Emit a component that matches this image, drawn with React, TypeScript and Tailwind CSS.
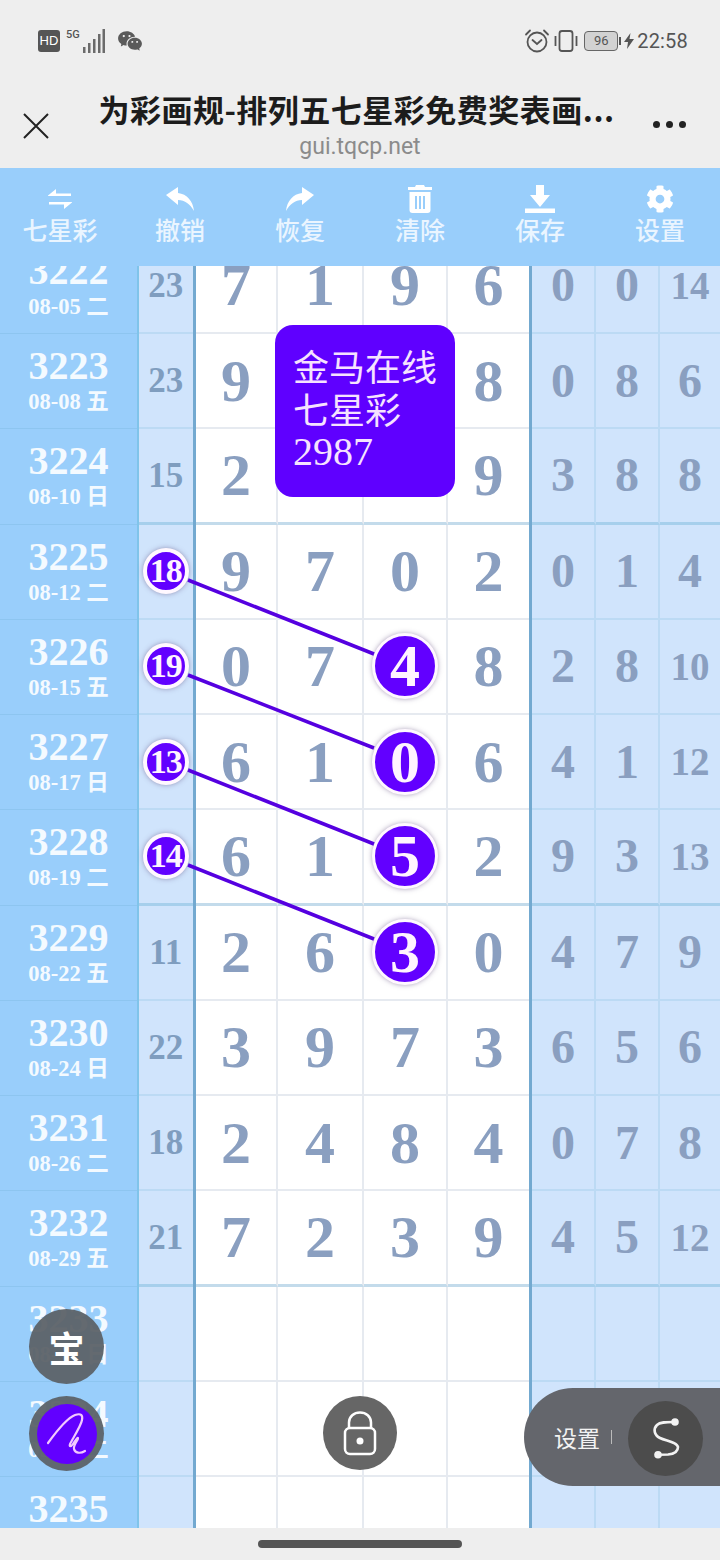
import React from 'react'
import {FaCog} from 'react-icons/fa'
import {RiWechatFill} from 'react-icons/ri'

const SERIF = 'font-["Liberation_Serif","Noto_Sans_CJK_SC",serif]'

type Cell = number | string | null

interface Row {
  no: number;
  date: string;
  sum: number | null;
  ball?: number;
  digits: Cell[];
  hit?: number;
  tail: Cell[];
}

const rows: Row[] = [
  {no: 3222, date: '08-05 二', sum: 23, digits: [7, 1, 9, 6], tail: [0, 0, 14]},
  {no: 3223, date: '08-08 五', sum: 23, digits: [9, null, null, 8], tail: [0, 8, 6]},
  {no: 3224, date: '08-10 日', sum: 15, digits: [2, null, null, 9], tail: [3, 8, 8]},
  {no: 3225, date: '08-12 二', sum: null, ball: 18, digits: [9, 7, 0, 2], tail: [0, 1, 4]},
  {no: 3226, date: '08-15 五', sum: null, ball: 19, digits: [0, 7, 4, 8], hit: 2, tail: [2, 8, 10]},
  {no: 3227, date: '08-17 日', sum: null, ball: 13, digits: [6, 1, 0, 6], hit: 2, tail: [4, 1, 12]},
  {no: 3228, date: '08-19 二', sum: null, ball: 14, digits: [6, 1, 5, 2], hit: 2, tail: [9, 3, 13]},
  {no: 3229, date: '08-22 五', sum: 11, digits: [2, 6, 3, 0], hit: 2, tail: [4, 7, 9]},
  {no: 3230, date: '08-24 日', sum: 22, digits: [3, 9, 7, 3], tail: [6, 5, 6]},
  {no: 3231, date: '08-26 二', sum: 18, digits: [2, 4, 8, 4], tail: [0, 7, 8]},
  {no: 3232, date: '08-29 五', sum: 21, digits: [7, 2, 3, 9], tail: [4, 5, 12]},
  {no: 3233, date: '08-31 日', sum: null, digits: [null, null, null, null], tail: [null, null, null]},
  {no: 3234, date: '09-02 二', sum: null, digits: [null, null, null, null], tail: [null, null, null]},
  {no: 3235, date: '09-05 五', sum: null, digits: [null, null, null, null], tail: [null, null, null]},
]

const links = [
  [188, 580, 374, 654],
  [188, 675, 374, 748],
  [188, 770, 374, 844],
  [188, 865, 374, 939],
]

const digitCols = ['w-[82px]', 'w-[86px]', 'w-[84px]', 'w-[81px]']
const tailCols = ['w-[64px]', 'w-[64px]', 'w-[60px]']

function SwapIcon() {
  return (
    <svg width="28" height="28" viewBox="0 0 28 28" fill="white">
      <path d="M2 10.500 10 4v4.500h15V11H2z" />
      <path d="M26 17.500 18 24v-4.500H3V17h23z" />
    </svg>
  )
}

function ReplyIcon() {
  return (
    <svg width="30" height="28" viewBox="0 0 30 28" fill="white">
      <path d="M1 10 13 2v6c9 1 15 8 16 18-4-7-9-11-16-11v5z" />
    </svg>
  )
}

function ShareIcon() {
  return (
    <svg width="30" height="28" viewBox="0 0 30 28" fill="white">
      <path d="M29 10 17 2v6C8 9 2 16 1 26c4-7 9-11 16-11v5z" />
    </svg>
  )
}

function TrashIcon() {
  return (
    <svg width="26" height="30" viewBox="0 0 26 30" fill="white">
      <path d="M9 1h8l1 2h7v3H1V3h7z" />
      <path fillRule="evenodd" d="M2.500 8h21v18a3 3 0 0 1-3 3h-15a3 3 0 0 1-3-3zM8 12v13h2V12zm4 0v13h2V12zm4 0v13h2V12z" />
    </svg>
  )
}

function DownloadIcon() {
  return (
    <svg width="30" height="30" viewBox="0 0 30 30" fill="white">
      <path d="M11 1h8v10h6L15 23 5 11h6z" />
      <rect x="0" y="24.500" width="30" height="4.500" />
    </svg>
  )
}

function ToolButton({icon, label}: {icon: React.ReactNode; label: string}) {
  return (
    <div className="w-[120px] flex flex-col items-center">
      <div className="h-[30px] flex items-center justify-center">{icon}</div>
      <div className="text-[25px] leading-[30px] font-medium text-[#eaf5ff]">{label}</div>
    </div>
  )
}

function StatusBar() {
  return (
    <div className="h-[72px] pt-[28px] pl-[38px] pr-[32px] flex items-start justify-between text-[#555]">
      <div className="flex items-center">
        <div className="w-[22px] h-[22px] rounded-[3px] bg-[#555] text-white text-[13px] leading-[22px] text-center font-['Liberation_Sans',sans-serif]">HD</div>
        <div className="w-[17px] ml-[6px] mb-[12px] text-[11px] leading-[12px] font-medium font-['Roboto',sans-serif]">5G</div>
        <svg width="24" height="26" viewBox="0 0 24 26" fill="#6b6b6b" className="-ml-[1px]">
          <rect x="1" y="19" width="2.500" height="6" />
          <rect x="6" y="15" width="2.500" height="10" />
          <rect x="11" y="11" width="2.500" height="14" />
          <rect x="16" y="6" width="2.500" height="19" />
          <rect x="20.500" y="1" width="2.500" height="24" />
        </svg>
        <RiWechatFill className="ml-[11px] text-[26px] text-[#5a5a5a]" />
      </div>
      <div className="flex items-center">
        <svg width="26" height="26" viewBox="0 0 26 26" fill="none" stroke="#555" strokeWidth="1.800" strokeLinecap="round">
          <circle cx="13" cy="14" r="9.500" />
          <path d="M8.500 12 13 16l4.500-4" />
          <path d="M2 6.500 6 2.500M24 6.500 20 2.500" />
        </svg>
        <svg width="26" height="24" viewBox="0 0 26 24" fill="none" stroke="#555" strokeWidth="1.800" className="ml-[3px]">
          <rect x="6.500" y="2" width="13" height="20" rx="2.500" />
          <path d="M2.500 7v10M23.500 7v10" />
        </svg>
        <div className="ml-[5px] w-[34px] h-[20px] rounded-[4px] border border-[#666] bg-[#d2d2d2] text-[13px] leading-[18px] text-center font-['Roboto',sans-serif]">96</div>
        <div className="ml-[1px] w-[2px] h-[8px] bg-[#555]" />
        <svg width="10" height="16" viewBox="0 0 10 16" fill="#555" className="ml-[3px]">
          <path d="M6.500 0 0 9h4l-1 7 7-10H5.500z" />
        </svg>
        <div className="ml-[3px] text-[20px] leading-[26px] font-['Roboto',sans-serif] tracking-[0.2px]">22:58</div>
      </div>
    </div>
  )
}

function TitleBar() {
  return (
    <div className="h-[96px] flex items-start">
      <div className="w-[97px] pl-[22px] pt-[40px] flex-none">
        <svg width="28" height="28" viewBox="0 0 28 28" stroke="#222" strokeWidth="2">
          <path d="M2 2 26 26M26 2 2 26" />
        </svg>
      </div>
      <div className="w-[526px] flex-none flex flex-col items-center pt-[19px]">
        <div className="text-[31px] leading-[36px] font-semibold tracking-[0.5px] text-[#1c1c1c] whitespace-nowrap font-['Noto_Sans_CJK_SC',sans-serif] -ml-[7px]">为彩画规-排列五七星彩免费奖表画...</div>
        <div className="text-[23px] leading-[30px] mt-[5px] text-[#8b8b8b] font-['Roboto',sans-serif]">gui.tqcp.net</div>
      </div>
      <div className="flex-1 pt-[49px] pl-[30px] flex gap-[6px]">
        <div className="w-[7px] h-[7px] rounded-full bg-[#222]" />
        <div className="w-[7px] h-[7px] rounded-full bg-[#222]" />
        <div className="w-[7px] h-[7px] rounded-full bg-[#222]" />
      </div>
    </div>
  )
}

function Ball({value, big}: {value: number; big?: boolean}) {
  return big ? (
    <div className={`w-[66px] h-[66px] rounded-full bg-[#6200ff] border-[3px] border-[#fff8ff] shadow-[0_0_5px_rgba(90,70,120,0.5)] flex items-center justify-center text-[#fff4ff] font-bold text-[60px] leading-none ${SERIF}`}>{value}</div>
  ) : (
    <div className={`w-[46px] h-[46px] rounded-full bg-[#6200ff] border-[4px] border-[#fff8ff] shadow-[0_0_5px_rgba(90,70,120,0.5)] flex items-center justify-center text-[#fff4ff] font-bold text-[34px] tracking-[-1px] leading-none ${SERIF}`}>{value}</div>
  )
}

function GridRow({row}: {row: Row}) {
  // every fourth row closes a group with a heavier rule
  const heavy = (row.no - 3224) % 4 === 0
  const whiteRule = heavy ? 'border-b-[3px] border-[#c3dbeb]' : 'border-b-2 border-[#e6eaf0]'
  const blueRule = heavy ? 'border-b-[3px] border-[#a6cfec]' : 'border-b-2 border-[#bcdaf4]'

  return (
    <div className="h-[95.25px] flex flex-none">
      <div className="w-[137px] flex-none bg-[#99cefb] border-b border-[#8dc5f0] flex flex-col items-center justify-center text-[#f4faff] font-bold">
        <div className={`text-[40px] leading-[42px] ${SERIF}`}>{row.no}</div>
        <div className={`text-[22.500px] leading-[30px] ${SERIF}`}>{row.date}</div>
      </div>
      <div className="w-[1.500px] flex-none bg-[#80c4ea]" />
      <div className={`w-[54.500px] flex-none bg-[#d0e4fc] ${blueRule} flex items-center justify-center overflow-visible`}>
        {row.ball ? <Ball value={row.ball} /> : (
          <span className={`text-[35px] leading-none font-bold text-[#7f9dbf] ${SERIF}`}>{row.sum}</span>
        )}
      </div>
      <div className="w-[3px] flex-none bg-[#73a9d0]" />
      {row.digits.map((d, i) => (
        <div key={i} className={`${digitCols[i]} flex-none bg-white ${whiteRule} ${i < 3 ? 'border-r-2 border-r-[#e6eaf0]' : ''} flex items-center justify-center`}>
          {row.hit === i ? <Ball value={d as number} big /> : (
            <span className={`text-[60px] leading-none font-bold text-[#8a9fc0] ${SERIF}`}>{d}</span>
          )}
        </div>
      ))}
      <div className="w-[3px] flex-none bg-[#73a9d0]" />
      {row.tail.map((t, i) => (
        <div key={i} className={`${tailCols[i]} flex-none bg-[#d0e4fc] ${blueRule} ${i < 2 ? 'border-r-2 border-r-[#bcdaf4]' : ''} flex items-center justify-center`}>
          <span className={`${typeof t === 'number' && t > 9 ? 'text-[39px]' : 'text-[48px]'} leading-none font-bold text-[#8a9fc0] ${SERIF}`}>{t}</span>
        </div>
      ))}
    </div>
  )
}

export default function App() {
  return (
    <div className="relative w-[720px] h-[1560px] overflow-hidden bg-[#eeeeee] font-['Noto_Sans_CJK_SC',sans-serif]">
      <StatusBar />
      <TitleBar />

      <div className="h-[98px] pt-[16px] bg-[#99cefb] flex relative z-10">
        <ToolButton icon={<SwapIcon />} label="七星彩" />
        <ToolButton icon={<ReplyIcon />} label="撤销" />
        <ToolButton icon={<ShareIcon />} label="恢复" />
        <ToolButton icon={<TrashIcon />} label="清除" />
        <ToolButton icon={<DownloadIcon />} label="保存" />
        <ToolButton icon={<FaCog className="text-white text-[28px]" />} label="设置" />
      </div>

      <div className="h-[1262px] overflow-hidden flex flex-col">
        <div className="-mt-[27.250px] flex flex-col">
          {rows.map(r => <GridRow key={r.no} row={r} />)}
        </div>
      </div>

      <div className="h-[32px] flex justify-center pt-[12px]">
        <div className="w-[204px] h-[8px] rounded-full bg-[#555]" />
      </div>

      <svg className="absolute left-0 top-0 pointer-events-none" width="720" height="1560">
        {links.map((l, i) => (
          <line key={i} x1={l[0]} y1={l[1]} x2={l[2]} y2={l[3]} stroke="#5500e0" strokeWidth="3.500" />
        ))}
      </svg>

      <div className="absolute left-[275px] top-[325px] w-[180px] h-[172px] rounded-[18px] bg-[#5f00ff] text-[#f6e2ff] pl-[18px] pt-[19px] text-[36px] leading-[43px]">
        <div>金马在线</div>
        <div>七星彩</div>
        <div className="font-['Liberation_Serif',serif] text-[40px]">2987</div>
      </div>

      <div className="absolute left-[29px] top-[1309px] w-[75px] h-[75px] rounded-full bg-[#5c6268]/95 flex items-center justify-center text-white text-[36px] font-bold">宝</div>

      <div className="absolute left-[29px] top-[1396px] w-[75px] h-[75px] rounded-full bg-[#5c6268]/95 flex items-center justify-center">
        <div className="w-[60px] h-[60px] rounded-full bg-[#6200ff] flex items-center justify-center">
          <svg width="44" height="44" viewBox="0 0 44 44" fill="none" stroke="#f2c8ff" strokeWidth="2.200" strokeLinecap="round" strokeLinejoin="round">
            <path d="M3 31C11 20 22 6 30 3c6-2 8 0 7 5-1 6-9 18-12 24-1 3 1 3 3 0 2-3 5-7 5-6 1 1-5 7-4 11 1 4 6 5 11 2" />
          </svg>
        </div>
      </div>

      <div className="absolute left-[323px] top-[1396px] w-[74px] h-[74px] rounded-full bg-[#666666] flex items-center justify-center">
        <svg width="36" height="46" viewBox="0 0 36 46" fill="none" stroke="white" strokeWidth="2.500">
          <path d="M7 18v-5.500C7 6.500 12 2.500 18 2.500s11 4 11 10V18" />
          <rect x="3" y="18" width="30" height="26" rx="5" />
          <circle cx="18" cy="31" r="3.500" fill="white" stroke="none" />
        </svg>
      </div>

      <div className="absolute left-[524px] top-[1388px] w-[196px] h-[98px] rounded-l-[49px] bg-[#64666c] flex items-center pl-[30px]">
        <span className="text-[23px] text-[#f2f2f2] w-[48px] whitespace-nowrap">设置</span>
        <div className="ml-[9px] w-px h-[14px] bg-[#bbb]" />
        <div className="ml-[16px] w-[75px] h-[75px] rounded-full bg-[#4c4c4c] flex items-center justify-center mt-[2px]">
          <svg width="36" height="44" viewBox="0 0 36 44" fill="none" stroke="#f2f2f2" strokeWidth="2.600" strokeLinecap="round">
            <path d="M26 6C18 6 12 6 9 9 5 13 6 19 12 22 18 25 29 26 30 31 30 36 26 38 20 38.500L10 38.700" />
            <circle cx="27" cy="6" r="3.800" fill="#f2f2f2" stroke="none" />
            <circle cx="10" cy="38.700" r="3.800" fill="#f2f2f2" stroke="none" />
          </svg>
        </div>
      </div>
    </div>
  )
}
